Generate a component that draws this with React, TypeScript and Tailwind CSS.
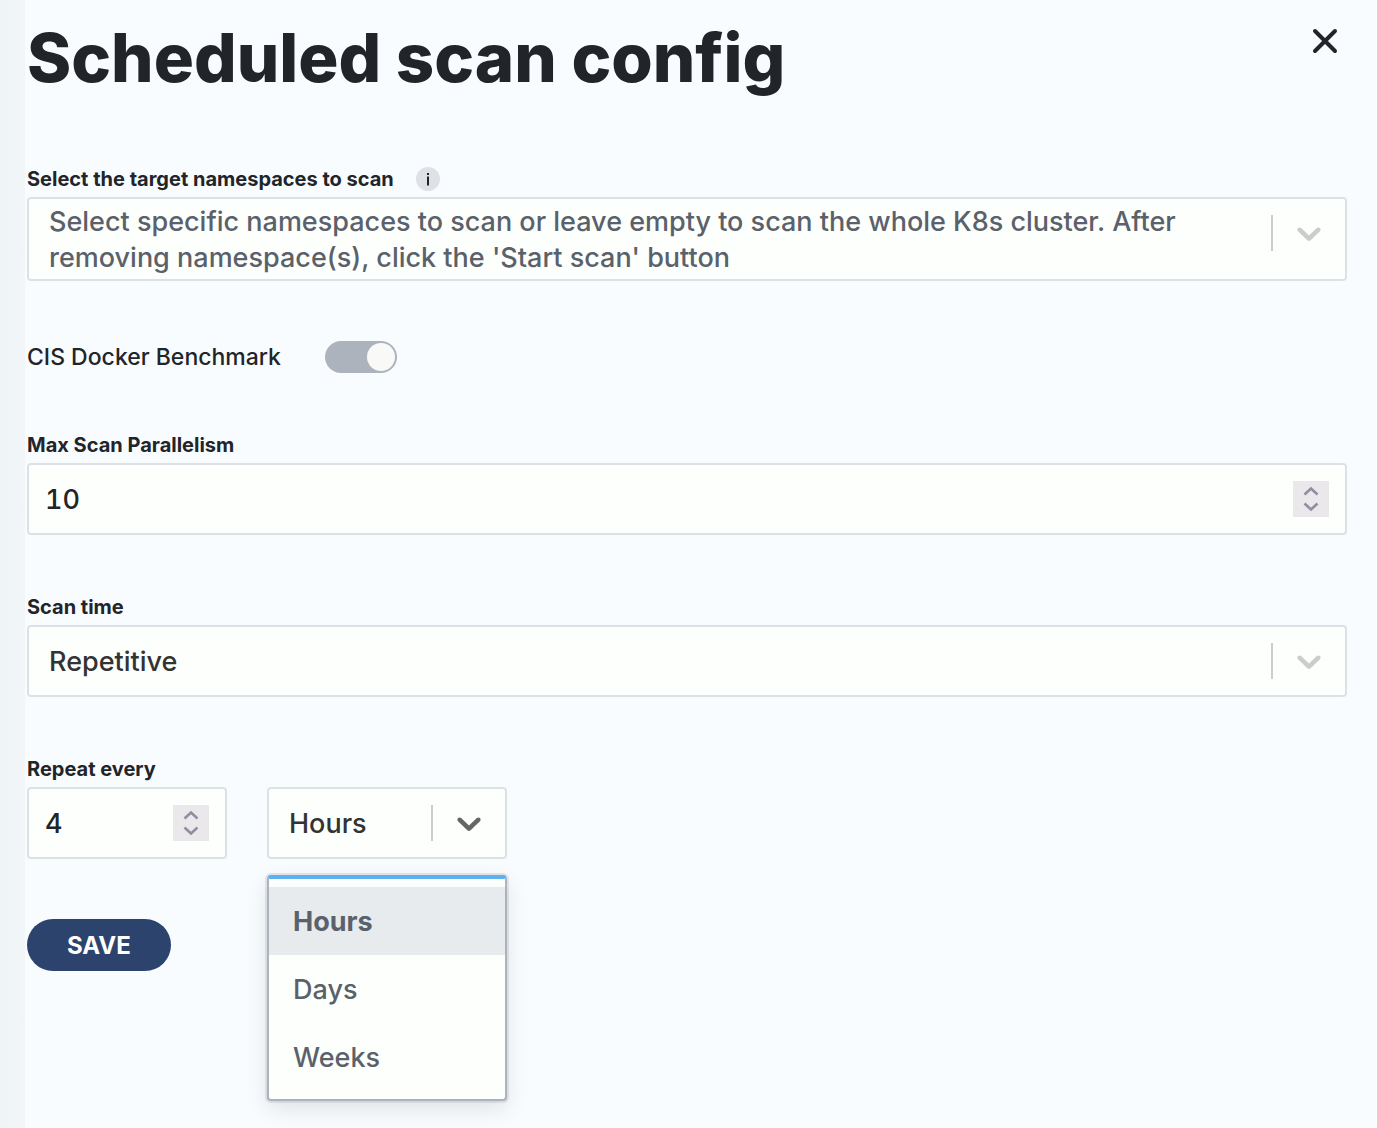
import { useState } from "react";
import type { ReactNode } from "react";

function DownChevron() {
  return (
    <svg viewBox="0 0 20 20" className="size-10 fill-current" aria-hidden="true">
      <path d="M4.516 7.548c0.436-0.446 1.043-0.481 1.576 0l3.908 3.747 3.908-3.747c0.533-0.481 1.141-0.446 1.574 0 0.436 0.445 0.408 1.197 0 1.615-0.406 0.418-4.695 4.502-4.695 4.502-0.217 0.223-0.502 0.335-0.787 0.335s-0.57-0.112-0.789-0.335c0 0-4.287-4.084-4.695-4.502s-0.436-1.17 0-1.615z" />
    </svg>
  );
}

function Indicators({ active = false }: { active?: boolean }) {
  return (
    <span className="pointer-events-none flex h-[68px] shrink-0 items-center">
      <span className="h-9 w-0.5 bg-[#cccccc]" />
      <span className={active ? "px-4 text-[#666666]" : "px-4 text-[#cccccc]"}>
        <DownChevron />
      </span>
    </span>
  );
}

function FieldLabel({ htmlFor, children }: { htmlFor: string; children: ReactNode }) {
  return (
    <label htmlFor={htmlFor} className="block text-xl leading-9 font-bold">
      {children}
    </label>
  );
}

function SelectBox({
  id,
  label,
  value,
  options,
  active = false,
  onChange,
}: {
  id: string;
  label?: string;
  value: string;
  options: string[];
  active?: boolean;
  onChange: (value: string) => void;
}) {
  return (
    <div className="grid rounded border-2 border-[#dce2e4] bg-[#fdfffc]">
      <select
        id={id}
        aria-label={label}
        value={value}
        onChange={(e) => onChange(e.target.value)}
        className="col-start-1 row-start-1 h-[68px] w-full appearance-none bg-transparent pt-0.5 pl-5 text-[27px] font-medium text-[#333333] outline-none"
      >
        {options.map((o) => (
          <option key={o}>{o}</option>
        ))}
      </select>
      <div className="pointer-events-none col-start-1 row-start-1 justify-self-end">
        <Indicators active={active} />
      </div>
    </div>
  );
}

function NumberBox({
  id,
  value,
  onChange,
}: {
  id: string;
  value: number;
  onChange: (value: number) => void;
}) {
  const stroke = {
    fill: "none",
    stroke: "currentColor",
    strokeWidth: 2.6,
  };
  return (
    <div className="flex items-center rounded border-2 border-[#dce2e4] bg-[#fdfffc] pr-4">
      <input
        id={id}
        type="number"
        value={value}
        onChange={(e) => onChange(Number(e.target.value))}
        className="h-[68px] min-w-0 flex-1 appearance-none bg-transparent pl-4 text-[27px] font-medium tabular-nums outline-none [-moz-appearance:textfield] [&::-webkit-inner-spin-button]:hidden"
      />
      <div className="flex size-9 flex-col bg-[#ebe8ec] text-[#8e90a0]">
        <button type="button" aria-label="Increase" onClick={() => onChange(value + 1)} className="h-[18px]">
          <svg viewBox="0 0 36 18" className="h-[18px] w-9" aria-hidden="true">
            <path d="M11.5 13.5 18 7.5l6.5 6" {...stroke} />
          </svg>
        </button>
        <button type="button" aria-label="Decrease" onClick={() => onChange(value - 1)} className="h-[18px]">
          <svg viewBox="0 0 36 18" className="h-[18px] w-9" aria-hidden="true">
            <path d="M11.5 4.5 18 10.5l6.5-6" {...stroke} />
          </svg>
        </button>
      </div>
    </div>
  );
}

const UNITS = ["Hours", "Days", "Weeks"];

export default function App() {
  const [benchmark, setBenchmark] = useState(false);
  const [parallelism, setParallelism] = useState(10);
  const [scanTime, setScanTime] = useState("Repetitive");
  const [every, setEvery] = useState(4);
  const [unit, setUnit] = useState("Hours");

  return (
    <div className="flex min-h-screen bg-[#f9fcff] font-['Inter',sans-serif] text-[#212529]">
      <div className="w-[25px] shrink-0 bg-linear-to-r from-[#eef3f6] to-[#f2f6f9]" />
      <main className="min-w-0 flex-1 pr-[30px] pb-6 pl-0.5">
        <header className="flex items-start justify-between pt-4">
          <h1 className="text-[67px] leading-[84px] font-extrabold">Scheduled scan config</h1>
          <button type="button" aria-label="Close" className="mt-2 mr-1.5">
            <svg viewBox="0 0 32 32" className="size-8" aria-hidden="true">
              <path
                d="M6 7 26 27M26 7 6 27"
                fill="none"
                stroke="currentColor"
                strokeWidth="4"
                strokeLinecap="round"
              />
            </svg>
          </button>
        </header>

        <form onSubmit={(e) => e.preventDefault()}>
          <section className="mt-[61px]">
            <div className="flex items-center gap-[22px]">
              <FieldLabel htmlFor="namespaces">Select the target namespaces to scan</FieldLabel>
              <button
                type="button"
                aria-label="More information"
                className="flex size-6 items-center justify-center rounded-full bg-[#dee2e6]"
              >
                <svg viewBox="0 0 24 24" className="size-6 fill-current" aria-hidden="true">
                  <rect x="11" y="6" width="2" height="2" />
                  <rect x="11" y="9.5" width="2" height="9" />
                </svg>
              </button>
            </div>
            <button
              id="namespaces"
              type="button"
              aria-haspopup="listbox"
              className="flex w-full items-start rounded border-2 border-[#dce2e4] bg-[#fdfffc] text-left"
            >
              <span className="flex-1 pt-[5px] pr-4 pb-[3px] pl-5 text-[27px] leading-9 font-medium text-[#5a616b]">
                Select specific namespaces to scan or leave empty to scan the whole K8s cluster. After removing
                namespace(s), click the 'Start scan' button
              </span>
              <Indicators />
            </button>
          </section>

          <label className="mt-[60px] flex w-fit items-center gap-11 text-[23px] leading-8 font-medium">
            CIS Docker Benchmark
            <input
              type="checkbox"
              role="switch"
              checked={benchmark}
              onChange={(e) => setBenchmark(e.target.checked)}
              className="flex h-8 w-[72px] appearance-none items-center justify-end rounded-full bg-[#adb3bc] pr-0.5 before:size-7 before:rounded-full before:bg-[#f9faf8] checked:bg-[#2c436e]"
            />
          </label>

          <section className="mt-[54px]">
            <FieldLabel htmlFor="parallelism">Max Scan Parallelism</FieldLabel>
            <NumberBox id="parallelism" value={parallelism} onChange={setParallelism} />
          </section>

          <section className="mt-[54px]">
            <FieldLabel htmlFor="scan-time">Scan time</FieldLabel>
            <SelectBox
              id="scan-time"
              value={scanTime}
              options={["Repetitive", "Specific time", "Now"]}
              onChange={setScanTime}
            />
          </section>

          <section className="mt-[54px]">
            <FieldLabel htmlFor="every">Repeat every</FieldLabel>
            <div className="flex gap-10">
              <div className="w-[200px]">
                <NumberBox id="every" value={every} onChange={setEvery} />
              </div>
              <div className="relative w-60">
                <SelectBox id="unit" label="Repeat unit" value={unit} options={UNITS} active onChange={setUnit} />
                <ul
                  role="listbox"
                  aria-label="Repeat unit options"
                  className="absolute top-full left-0 mt-4 w-full rounded border-2 border-t-4 border-[#adb3bd] border-t-[#5eb1ef] bg-[#fdfffc] py-2 text-[27px] font-medium text-[#5a616b] shadow-[0_0_0_2px_rgba(0,0,0,0.08),0_8px_22px_rgba(0,0,0,0.1)]"
                >
                  {UNITS.map((u) => (
                    <li
                      key={u}
                      role="option"
                      aria-selected={u === unit}
                      onClick={() => setUnit(u)}
                      className={
                        u === unit
                          ? "flex h-[68px] cursor-pointer items-center bg-[#e7ebee] px-6 pt-0.5 font-bold"
                          : "flex h-[68px] cursor-pointer items-center px-6 pt-0.5"
                      }
                    >
                      {u}
                    </li>
                  ))}
                </ul>
              </div>
            </div>
          </section>

          <button
            type="submit"
            className="mt-[60px] h-[52px] rounded-full bg-[#2c436e] px-10 pt-0.5 text-2xl font-bold text-white"
          >
            SAVE
          </button>
        </form>
      </main>
    </div>
  );
}
